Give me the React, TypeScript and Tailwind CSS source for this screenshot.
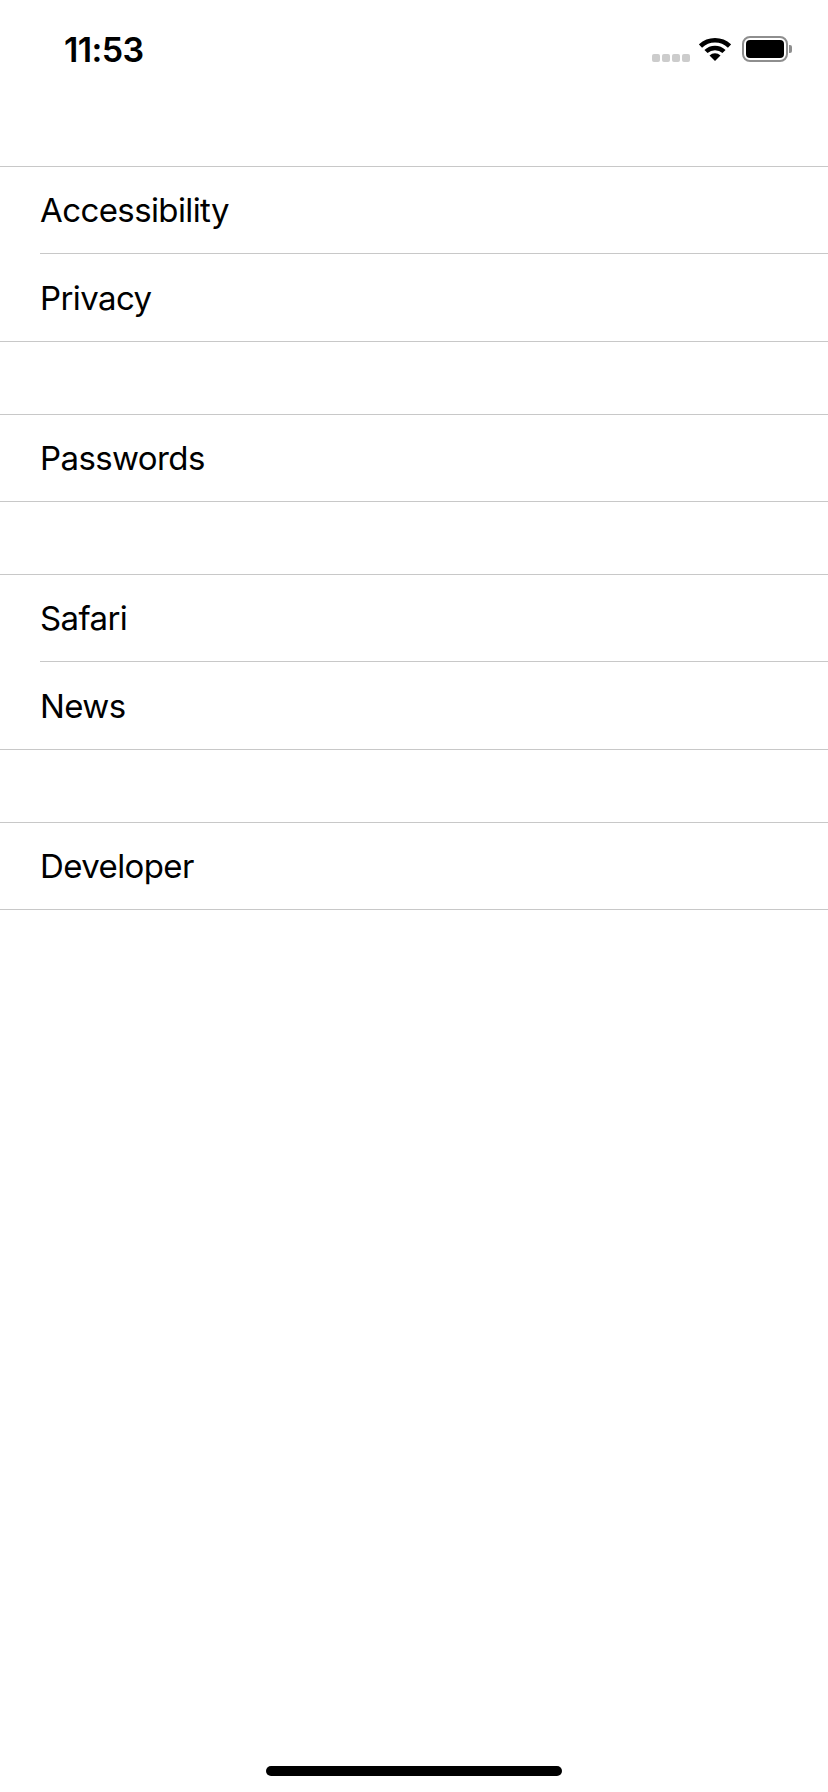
import React from 'react';

const sections = [['Accessibility', 'Privacy'], ['Passwords'], ['Safari', 'News'], ['Developer']];

function StatusBar() {
  return (
    <div className="h-[166px] shrink-0 flex items-start justify-between">
      <div className="ml-[64px] mt-[31px] text-[34px] leading-[38px] font-semibold tracking-[-0.6px] text-black">11:53</div>
      <div className="mr-[36px] mt-[36px] flex items-start">
        <div className="flex gap-[2px] mt-[18px] mr-[9px]">
          <div className="w-[8px] h-[8px] rounded-[2px] bg-[#cccccc]" />
          <div className="w-[8px] h-[8px] rounded-[2px] bg-[#cccccc]" />
          <div className="w-[8px] h-[8px] rounded-[2px] bg-[#cccccc]" />
          <div className="w-[8px] h-[8px] rounded-[2px] bg-[#cccccc]" />
        </div>
        <svg width="32" height="24" viewBox="0 0 32 24" className="mt-[1px] mr-[11px]">
          <path d="M1.5 9 A21 21 0 0 1 30.500 9" fill="none" stroke="#000" strokeWidth="4.500" />
          <path d="M7 14.500 A13 13 0 0 1 25 14.500" fill="none" stroke="#000" strokeWidth="4.500" />
          <path d="M10.5 18.500 A8 8 0 0 1 21.500 18.500 L16 24 Z" fill="#000" />
        </svg>
        <div className="w-[46px] h-[26px] rounded-[8px] border-2 border-[#8e8e8e] p-[2px]">
          <div className="w-full h-full rounded-[4px] bg-black" />
        </div>
        <div className="ml-[1px] mt-[9px] w-[3px] h-[8px] rounded-r-[2px] bg-[#8e8e8e]" />
      </div>
    </div>
  );
}

export default function App() {
  return (
    <div className="relative w-[828px] h-[1792px] bg-white flex flex-col overflow-hidden font-['Inter',sans-serif]">
      <StatusBar />
      <div className="flex flex-col gap-[72px]">
        {sections.map((rows) => (
          <div key={rows[0]} className="border-t border-b border-[#c8c8c8]">
            {rows.map((row, i) => (
              <div key={row} className="pl-[40px]">
                <div className={`flex items-center pt-[2px] text-[33px] tracking-[-0.6px] text-black ${i > 0 ? 'h-[88px] border-t border-[#c8c8c8]' : 'h-[86px]'}`}>
                  {row}
                </div>
              </div>
            ))}
          </div>
        ))}
      </div>
      <div className="absolute left-[266px] top-[1766px] w-[296px] h-[10px] rounded-full bg-black" />
    </div>
  );
}
